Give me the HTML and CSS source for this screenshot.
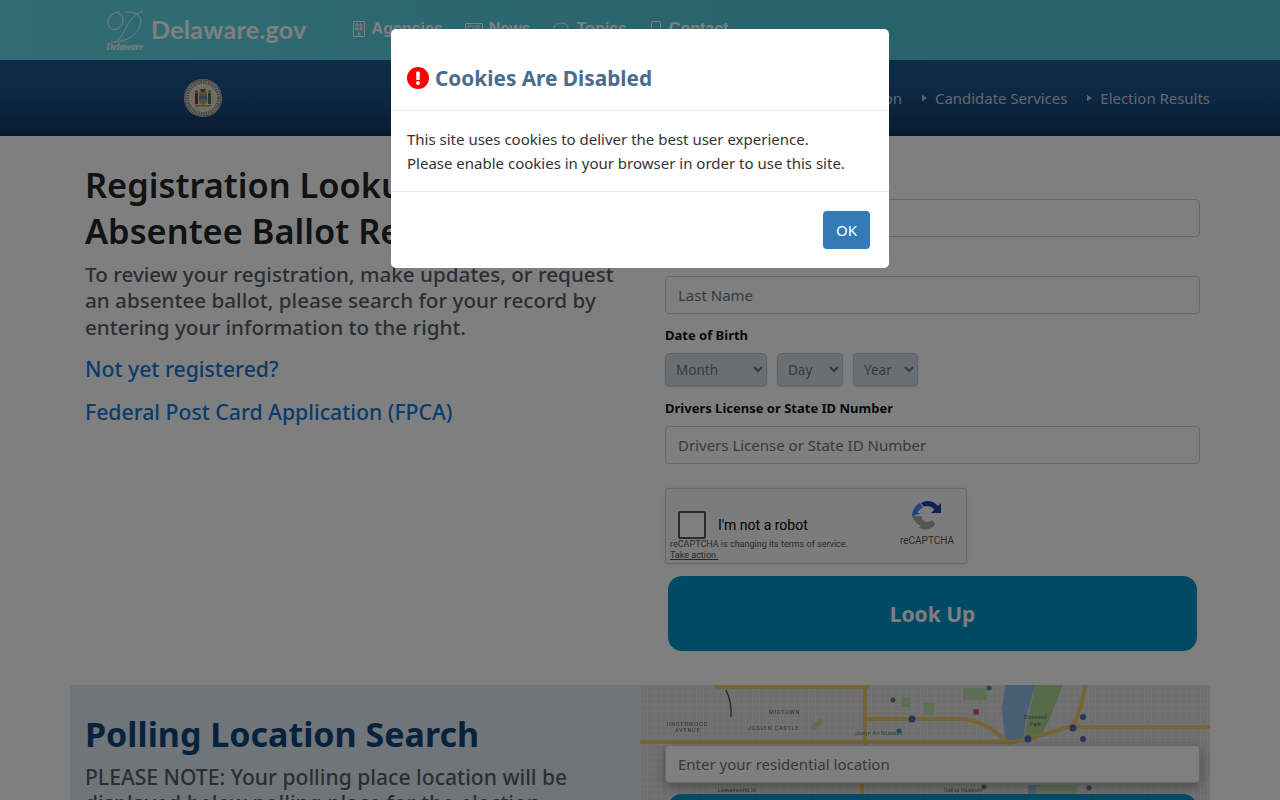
FILE: index.html
```html
<!DOCTYPE html>
<html lang="en">
<head>
<meta charset="utf-8">
<title>Delaware Voter Portal</title>
<link rel="stylesheet" href="styles.css">
</head>
<body>
<div class="page">
  <header class="topbar">
    <a class="brand">
      <span class="mark">
        <svg class="mark-d" viewBox="0 0 38 33" width="38" height="33"><path d="M37 1C28 4 22 12 18 22 15 28 10 33 5 32M14 2C6 2 1 8 2 14 3 20 10 22 15 16 19 11 17 4 12 4M20 2C32 1 37 8 34 16 31 25 20 32 8 32" fill="none" stroke="currentColor" stroke-width=".9"/></svg>
        <span class="mark-name">Delaware</span>
      </span>
      <span class="brand-name">Delaware.gov</span>
    </a>
    <nav class="topnav">
      <a class="topnav-item"><svg class="ti" viewBox="0 0 14 16"><path d="M1.500.5h11v15h-11zM4 3h2v2H4zM8 3h2v2H8zM4 7h2v2H4zM8 7h2v2H8zM6 15v-3h2v3" fill="none" stroke="currentColor"/></svg>Agencies</a>
      <a class="topnav-item"><svg class="ti ti-wide" viewBox="0 0 18 14"><path d="M.5 1.500h17v11H.5zM3 4h5v4H3zM10 4h5M10 6h5M10 8h5M3 10h12" fill="none" stroke="currentColor"/></svg>News</a>
      <a class="topnav-item"><svg class="ti ti-wide" viewBox="0 0 18 14"><path d="M8 1c4 0 7 2 7 5s-3 5-7 5c-1 0-2 0-3-1l-3 2 1-3C1.500 8 1 7 1 6c0-3 3-5 7-5z" fill="none" stroke="currentColor"/></svg>Topics</a>
      <a class="topnav-item"><svg class="ti" viewBox="0 0 14 16"><path d="M3.500.5h7a1 1 0 0 1 1 1v13a1 1 0 0 1-1 1h-7a1 1 0 0 1-1-1v-13a1 1 0 0 1 1-1zM6 13h2" fill="none" stroke="currentColor"/></svg>Contact</a>
    </nav>
  </header>

  <div class="mainbar">
    <div class="seal">
      <svg viewBox="0 0 38 38" width="38" height="38">
        <circle cx="19" cy="19" r="19" fill="#e3dfd4"/>
        <circle cx="19" cy="19" r="18" fill="none" stroke="#777" stroke-width="1"/>
        <circle cx="19" cy="19" r="15.500" fill="none" stroke="#8a8a80" stroke-width="3" stroke-dasharray="1.500 1"/>
        <circle cx="19" cy="19" r="12.500" fill="#dcd8c8"/>
        <path d="M15 13h8v8c0 3-2 4-4 5-2-1-4-2-4-5z" fill="#b79b62"/>
        <rect x="15" y="16.500" width="8" height="4" fill="#5d8fa8"/>
        <circle cx="12.500" cy="12.500" r="1.300" fill="#8a5a40"/>
        <path d="M11 14h3v11h-3z" fill="#8c3b2c"/>
        <circle cx="25.500" cy="12.500" r="1.300" fill="#8a7a50"/>
        <path d="M24 14h3v11h-3z" fill="#3f7a45"/>
        <path d="M16 10h6l-1 3h-4z" fill="#4a6d3f"/>
        <rect x="11" y="26" width="16" height="1.500" fill="#a8924f"/>
      </svg>
    </div>
    <nav class="mainnav">
      <a class="mainnav-item">Voter Registration</a>
      <a class="mainnav-item">Candidate Services</a>
      <a class="mainnav-item">Election Results</a>
    </nav>
  </div>

  <main class="lookup">
    <section class="intro">
      <h1>Registration Lookup &amp; Absentee Ballot Request</h1>
      <p class="lead lead-intro">To review your registration, make updates, or request an absentee ballot, please search for your record by entering your information to the right.</p>
      <p class="link-row"><a>Not yet registered?</a></p>
      <p class="link-row"><a>Federal Post Card Application (FPCA)</a></p>
    </section>
    <form class="form">
      <label class="label">First Name</label>
      <input class="input" placeholder="First Name">
      <label class="label">Last Name</label>
      <input class="input" placeholder="Last Name">
      <label class="label">Date of Birth</label>
      <div class="dob">
        <select class="sel sel-month"><option>Month</option></select>
        <select class="sel sel-day"><option>Day</option></select>
        <select class="sel sel-year"><option>Year</option></select>
      </div>
      <label class="label">Drivers License or State ID Number</label>
      <input class="input" placeholder="Drivers License or State ID Number">
      <div class="captcha">
        <div class="captcha-row">
          <span class="check"></span>
          <span class="robot">I'm not a robot</span>
        </div>
        <div class="captcha-note">reCAPTCHA is changing its terms of service.<br><u>Take action.</u></div>
        <div class="captcha-logo">
          <svg viewBox="0 0 32 32" width="32" height="32">
            <path d="M16 1a15 15 0 0 1 11 5l3-3v10H20l3.500-3.500A10 10 0 0 0 16 6c-1 0-2 .2-3 .5L10 3c2-1.300 4-2 6-2z" fill="#1c3aa9"/>
            <path d="M1 16a15 15 0 0 1 8-13l3 4.500A10 10 0 0 0 6.200 13H10L2 16z" fill="#4285f4"/>
            <path d="M1 16h9.500a6 6 0 0 0 10.500 4l3.500 3.500A15 15 0 0 1 1 16z" fill="#ababab"/>
            <path d="M20 21l4 4a15 15 0 0 1-16 3l3-4a10 10 0 0 0 9-3z" fill="#ababab"/>
          </svg>
          <span>reCAPTCHA</span>
        </div>
      </div>
      <button type="button" class="cta">Look Up</button>
    </form>
  </main>

  <section class="polling">
    <div class="polling-text">
      <h2>Polling Location Search</h2>
      <p class="lead lead-dark">PLEASE NOTE: Your polling place location will be displayed below polling place for the election</p>
    </div>
    <div class="polling-map">
      <svg class="map" viewBox="0 0 570 115" width="570" height="115">
        <defs>
          <pattern id="streets" width="7" height="6.500" patternUnits="userSpaceOnUse">
            <rect width="7" height="6.500" fill="#dcdedc"/>
            <path d="M0 .5h7M.5 0v6.500" stroke="#e8e9e7" stroke-width="1"/>
          </pattern>
        </defs>
        <rect width="570" height="115" fill="url(#streets)"/>
        <path d="M323 3h24v12h-24zM284 18h10v12h-10zM262 12h8v10h-8zM170 42l12-10v8l-10 6zM396 100h41v15h-41z" fill="#bfdcae"/>
        <path d="M365 0h30l-8 30-4 25h-18l-3-30z" fill="#94bfe8"/>
        <path d="M388 100h8v15h-8z" fill="#94bfe8"/>
        <path d="M395 0h28l-12 30-10 22-18 6 6-28z" fill="#aed490"/>
        <g fill="none" stroke="#ecc96a" stroke-width="4">
          <path d="M75 2h154"/>
          <path d="M225 0v60"/>
          <path d="M225 34h97q25 2 46 24"/>
          <path d="M368 58q30-6 61-16 10-4 16-42"/>
          <path d="M429 42h141"/>
          <path d="M0 57h368"/>
          <path d="M222 99v16"/>
        </g>
        <path d="M86 5q6 12 5 27" fill="none" stroke="#5d5d5d" stroke-width="1.500"/>
        <g fill="#5f5f5f" font-family="Roboto, sans-serif" font-size="5.500">
          <text x="129" y="29" letter-spacing=".8">MIDTOWN</text>
          <text x="27" y="41" letter-spacing=".8">UNDERWOOD</text>
          <text x="35" y="47" letter-spacing=".8">AVENUE</text>
          <text x="108" y="45" letter-spacing=".8">JOSLYN CASTLE</text>
          <text x="384" y="34">Elmwood</text>
          <text x="390" y="41">Park</text>
          <text x="215" y="50" fill="#3e8e78">Joslyn Art Museum</text>
          <text x="304" y="107" fill="#3e8e78">Gallup Museum</text>
          <text x="78" y="107">Leavenworth St</text>
        </g>
        <circle cx="336" cy="27" r="3" fill="#d9548c"/>
        <circle cx="259" cy="46" r="2.500" fill="#3e9e90"/>
        <circle cx="253" cy="15" r="2.500" fill="#5a7f90"/>
        <circle cx="349" cy="3" r="2.500" fill="#5a7f90"/>
        <circle cx="344" cy="102" r="2.500" fill="#3e9e90"/>
        <circle cx="449" cy="103" r="2.500" fill="#5a7f90"/>
        <g fill="#4a6ab8">
          <circle cx="272" cy="34" r="3.500"/>
          <circle cx="433" cy="43" r="3.500"/>
          <circle cx="388" cy="54" r="3.500"/>
          <circle cx="443" cy="32" r="3"/>
          <circle cx="443" cy="54" r="3"/>
        </g>
      </svg>
      <input class="input input-map" placeholder="Enter your residential location">
      <button type="button" class="cta cta-map">Search</button>
    </div>
  </section>
</div>

<div class="overlay">
  <div class="modal">
    <div class="modal-head">
      <svg class="alert" viewBox="0 0 22 22" width="22" height="22"><circle cx="11" cy="11" r="11" fill="#f00"/><rect x="9.200" y="4.500" width="3.600" height="8.500" rx="1.200" fill="#fff"/><circle cx="11" cy="16" r="2" fill="#fff"/></svg>
      <h3>Cookies Are Disabled</h3>
    </div>
    <div class="modal-body">
      <p>This site uses cookies to deliver the best user experience.</p>
      <p>Please enable cookies in your browser in order to use this site.</p>
    </div>
    <div class="modal-foot"><button type="button" class="ok">OK</button></div>
  </div>
</div>
</body>
</html>
```
FILE: styles.css
```css
* { box-sizing: border-box; }
html, body { margin: 0; height: 800px; overflow: hidden; background: #fff; }
body { font-family: "Noto Sans", "Open Sans", sans-serif; color: #212529; position: relative; }
p { margin: 0; }

.page { width: 1280px; height: 800px; overflow: hidden; }

.topbar { height: 60px; display: flex; align-items: center; padding-left: 106px; background: linear-gradient(90deg, #64dae6 0%, #58cfde 35%, #50c6d6 70%, #4ec4d6 100%); }
.brand { display: flex; align-items: center; gap: 7px; color: #fff; }
.mark { width: 38px; height: 42px; display: flex; flex-direction: column; color: #fff; margin-top: 2px; }
.mark-d { display: block; }
.mark-name { font: italic 700 9.500px/10px "Liberation Serif", serif; margin-top: -1px; }
.brand-name { font: 700 25px/30px Lato, sans-serif; letter-spacing: .3px; margin-top: -2px; }
.topnav { display: flex; margin-left: 45px; margin-top: -2px; gap: 22px; color: #fff; font: 700 16px/20px "Liberation Sans", sans-serif; }
.topnav-item { display: flex; align-items: center; gap: 6px; }
.ti { width: 14px; height: 16px; }
.ti-wide { width: 18px; height: 14px; }

.mainbar { height: 76px; display: flex; align-items: center; justify-content: space-between; padding: 0 70px 0 184px; background: linear-gradient(180deg, #1c5a92 0%, #1a4f85 50%, #123560 100%); }
.seal { width: 38px; height: 38px; display: block; }
.seal svg { display: block; }
.mainnav { display: flex; gap: 20px; color: #c3cfdb; font-size: 14.950px; line-height: 20px; }
.mainnav-item { display: flex; align-items: center; gap: 8px; }
.mainnav-item::before { content: ""; border-left: 5px solid #c3cfdb; border-top: 3px solid transparent; border-bottom: 3px solid transparent; }

.lookup { height: 549px; display: grid; grid-template-columns: 555px 535px; column-gap: 25px; padding: 26px 80px 0 85px; }
.intro h1 { margin: 0 0 7px; font-size: 34.400px; line-height: 46px; font-weight: 600; width: 500px; }
.lead { font-size: 21.100px; line-height: 26.400px; font-weight: 500; color: #585d64; }
.lead-intro { font-size: 20.650px; width: 540px; }
.link-row { margin-top: 14px; font-size: 21.200px; line-height: 29px; font-weight: 500; color: #1278d8; }
.link-row + .link-row { margin-top: 14px; }
.form { display: flex; flex-direction: column; align-items: flex-start; }
.label { display: block; font-size: 13px; line-height: 18px; font-weight: 700; color: #111; margin-bottom: 9px; }
.form > .label:first-child { margin-top: 10px; }
.input { display: block; width: 535px; height: 38px; border: 1px solid #ced4da; border-radius: 4px; padding: 0 12px; background: #fff; font: 15px "Noto Sans", sans-serif; color: #495057; margin-bottom: 12px; }
.input::placeholder { color: #6c757d; opacity: 1; }
.dob { display: flex; gap: 10px; margin-bottom: 13px; }
.sel { height: 33px; border: 1px solid #bfc9d1; border-radius: 4px; background: #d3dee6; font: 13.500px "Noto Sans", sans-serif; color: #6c757d; padding: 1px 0 0 6px; box-shadow: 0 1px 2px rgba(0,0,0,.15); }
.sel-month { width: 102px; }
.sel-day { width: 66px; }
.sel-year { width: 65px; }

.captcha { position: relative; width: 302px; height: 76px; margin-top: 12px; border: 1px solid #d3d3d3; border-radius: 3px; background: #f9f9f9; box-shadow: 0 0 4px rgba(0,0,0,.08); font-family: Roboto, sans-serif; color: #000; }
.captcha-row { display: flex; align-items: center; gap: 12px; padding: 22px 0 0 12px; }
.check { width: 28px; height: 28px; border: 2px solid #555; border-radius: 2px; background: #fff; }
.robot { font-size: 14px; line-height: 18px; }
.captcha-note { position: absolute; left: 4px; top: 50px; font-size: 9px; line-height: 11px; color: #555; }
.captcha-logo { position: absolute; left: 234px; top: 11px; width: 54px; display: flex; flex-direction: column; align-items: center; font-size: 10px; line-height: 11px; color: #555; gap: 3px; }
.cta { width: 529px; height: 75px; margin: 12px 0 0 3px; border: 0; border-radius: 14px; background: #0094cc; color: #fff; font: 700 21px "Noto Sans", sans-serif; }

.polling { width: 1140px; height: 200px; margin-left: 70px; display: flex; }
.polling-text { width: 570px; padding: 27px 15px 0; background: #e1ebf2; height: 115px; overflow: hidden; }
.polling-text h2 { margin: 0 0 8px; font-size: 34px; line-height: 44px; font-weight: 700; color: #0d4478; white-space: nowrap; }
.lead-dark { width: 500px; }
.polling-map { position: relative; width: 570px; height: 115px; overflow: visible; }
.map { position: absolute; inset: 0; display: block; filter: blur(.5px); }
.input-map { position: absolute; left: 25px; top: 60px; width: 535px; height: 38px; box-shadow: 0 4px 12px rgba(0,0,0,.35); margin: 0; background: #fff; }
.cta-map { position: absolute; left: 28px; top: 109px; margin: 0; }

.overlay { position: absolute; inset: 0; width: 1280px; height: 800px; background: rgba(0,0,0,.5); }
.modal { position: absolute; left: 391px; top: 29px; width: 498px; height: 239px; background: #fff; border-radius: 5px; }
.modal-head { height: 82px; padding: 36px 16px 0; border-bottom: 1px solid #e9ecef; display: flex; align-items: flex-start; gap: 6px; }
.alert { margin-top: 2px; flex: none; }
.modal-head h3 { margin: 0; font-size: 20.800px; line-height: 26px; font-weight: 700; color: #4a6d8c; }
.modal-body { height: 81px; padding: 16px; border-bottom: 1px solid #e9ecef; font-size: 15px; line-height: 24px; color: #333; }
.modal-foot { display: flex; justify-content: flex-end; padding: 19px 19px 0 0; }
.ok { width: 47px; height: 38px; border: 0; border-radius: 4px; background: #337ab7; color: #fff; font: 15px "Noto Sans", sans-serif; padding: 0; }
```
